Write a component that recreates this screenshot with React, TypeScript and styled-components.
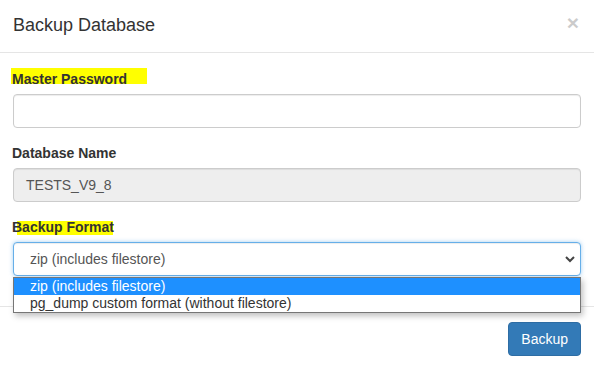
import React from "react";
import styled, { createGlobalStyle } from "styled-components";

const Global = createGlobalStyle`
  html, body { margin: 0; padding: 0; background: #fff; }
  body {
    font-family: "Liberation Sans", Arial, sans-serif;
    font-size: 14px;
    line-height: 1.42857;
    color: #333;
    overflow: hidden;
  }
  * { box-sizing: border-box; }
`;

const Modal = styled.div`
  width: 594px;
  height: 368px;
  background: #fff;
  display: flex;
  flex-direction: column;
  overflow: hidden;
`;

const Header = styled.div`
  display: flex;
  align-items: flex-start;
  justify-content: space-between;
  padding: 14px 15px 15px 13px;
  border-bottom: 1px solid #e5e5e5;
  height: 53px;
  flex-shrink: 0;
`;

const Title = styled.h4`
  margin: 0;
  font-size: 18px;
  font-weight: 400;
  line-height: 23px;
  color: #333;
`;

const Close = styled.button`
  border: 0;
  background: transparent;
  padding: 0;
  margin-top: -2px;
  font-family: "Liberation Sans", Arial, sans-serif;
  font-size: 21px;
  font-weight: 700;
  line-height: 1;
  color: #000;
  opacity: 0.2;
  cursor: pointer;
`;

const Body = styled.div`
  padding: 16px 13px 15px 13px;
  display: flex;
  flex-direction: column;
  flex-shrink: 0;
`;

const Group = styled.div`
  position: relative;
  display: flex;
  flex-direction: column;
  margin-bottom: 15px;
`;

const Label = styled.label`
  display: block;
  isolation: isolate;
  font-size: 14px;
  font-weight: 700;
  line-height: 20px;
  margin-bottom: 5px;
  margin-left: -1px;
  color: #333;
`;

const Mark = styled.span<{ $top: number; $height: number; $left: number; $right: number }>`
  position: relative;
  &::before {
    content: "";
    position: absolute;
    z-index: -1;
    background: #ffff00;
    top: ${(p) => p.$top}px;
    height: ${(p) => p.$height}px;
    left: ${(p) => p.$left}px;
    right: ${(p) => p.$right}px;
  }
`;

const Input = styled.div<{ $disabled?: boolean }>`
  height: 34px;
  padding: 6px 12px;
  font-size: 14px;
  line-height: 20px;
  color: #555;
  background: ${(p) => (p.$disabled ? "#eee" : "#fff")};
  border: 1px solid #ccc;
  border-radius: 4px;
  box-shadow: inset 0 1px 1px rgba(0, 0, 0, 0.075);
`;

const Select = styled.div`
  height: 34px;
  padding: 6px 12px 6px 16px;
  font-size: 14px;
  line-height: 20px;
  color: #555;
  background: #fff;
  border: 1px solid #66afe9;
  border-radius: 4px;
  box-shadow: inset 0 1px 1px rgba(0, 0, 0, 0.075), 0 0 4px rgba(102, 175, 233, 0.6);
  display: flex;
  align-items: center;
  justify-content: space-between;
`;

const Chevron = styled.svg`
  width: 10px;
  height: 8px;
  margin-right: -7px;
`;

const DropList = styled.div`
  position: absolute;
  left: 0;
  right: 0;
  top: 60px;
  background: #fff;
  border: 1px solid #767676;
  box-shadow: 2px 3px 6px rgba(0, 0, 0, 0.25);
  z-index: 10;
`;

const Option = styled.div<{ $active?: boolean }>`
  height: 17px;
  padding-left: 16px;
  font-size: 14px;
  line-height: 17px;
  color: ${(p) => (p.$active ? "#fff" : "#333")};
  background: ${(p) => (p.$active ? "#1e90ff" : "transparent")};
  white-space: nowrap;
`;

const Footer = styled.div`
  border-top: 1px solid #e5e5e5;
  padding: 15px 13px;
  display: flex;
  justify-content: flex-end;
  flex-shrink: 0;
`;

const Button = styled.button`
  height: 34px;
  padding: 6px 12px;
  font-family: "Liberation Sans", Arial, sans-serif;
  font-size: 14px;
  line-height: 20px;
  color: #fff;
  background: #337ab7;
  border: 1px solid #2e6da4;
  border-radius: 4px;
  cursor: pointer;
`;

export default function App() {
  return (
    <>
      <Global />
      <Modal>
        <Header>
          <Title>Backup Database</Title>
          <Close aria-label="Close">×</Close>
        </Header>
        <Body>
          <Group>
            <Label>
              <Mark $top={-3} $height={16} $left={-1} $right={-20}>
                Master Password
              </Mark>
            </Label>
            <Input />
          </Group>
          <Group>
            <Label>Database Name</Label>
            <Input $disabled>TESTS_V9_8</Input>
          </Group>
          <Group>
            <Label>
              <Mark $top={2} $height={14} $left={5} $right={1}>
                Backup Format
              </Mark>
            </Label>
            <Select>
              <span>zip (includes filestore)</span>
              <Chevron viewBox="0 0 10 8">
                <path d="M1 2 L5 6 L9 2" fill="none" stroke="#444" strokeWidth="2" />
              </Chevron>
            </Select>
            <DropList>
              <Option $active>zip (includes filestore)</Option>
              <Option>pg_dump custom format (without filestore)</Option>
            </DropList>
          </Group>
        </Body>
        <Footer>
          <Button>Backup</Button>
        </Footer>
      </Modal>
    </>
  );
}
